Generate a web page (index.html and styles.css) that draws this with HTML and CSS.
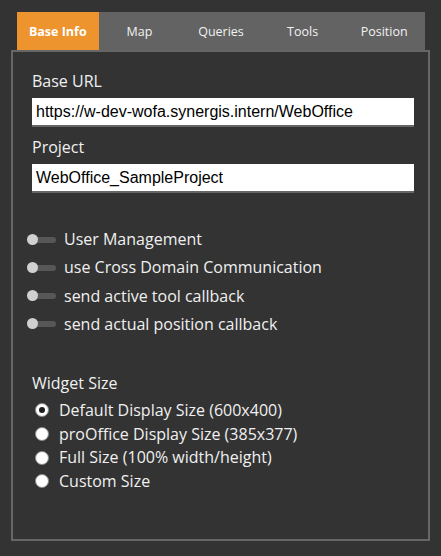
FILE: index.html
```html
<!DOCTYPE html>
<html>
<head>
<meta charset="utf-8">
<link rel="stylesheet" href="styles.css">
</head>
<body>
<div class="tabs">
  <div class="tab active">Base Info</div>
  <div class="tab">Map</div>
  <div class="tab">Queries</div>
  <div class="tab">Tools</div>
  <div class="tab">Position</div>
</div>
<div class="panel">
  <div class="label">Base URL</div>
  <div class="input">https://w-dev-wofa.synergis.intern/WebOffice</div>
  <div class="label">Project</div>
  <div class="input">WebOffice_SampleProject</div>

  <div class="toggles">
    <div class="toggle-row"><span class="toggle"><span class="knob"></span></span>User Management</div>
    <div class="toggle-row"><span class="toggle"><span class="knob"></span></span>use Cross Domain Communication</div>
    <div class="toggle-row"><span class="toggle"><span class="knob"></span></span>send active tool callback</div>
    <div class="toggle-row"><span class="toggle"><span class="knob"></span></span>send actual position callback</div>
  </div>

  <div class="label section">Widget Size</div>
  <div class="radios">
    <div class="radio-row"><span class="radio checked"></span>Default Display Size (600x400)</div>
    <div class="radio-row"><span class="radio"></span>proOffice Display Size (385x377)</div>
    <div class="radio-row"><span class="radio"></span>Full Size (100% width/height)</div>
    <div class="radio-row"><span class="radio"></span>Custom Size</div>
  </div>
</div>
</body>
</html>
```
FILE: styles.css
```css
html, body {
  margin: 0;
  padding: 0;
  background: #333333;
  height: 100%;
}
body {
  font-family: "Open Sans", "Noto Sans", sans-serif;
  color: #f0f0f0;
  padding-top: 12px;
}
.tabs {
  display: flex;
  margin-left: 17px;
  width: 408px;
  height: 38px;
  background: #636363;
}
.tab {
  flex: 1;
  display: flex;
  align-items: center;
  justify-content: center;
  font-size: 12.5px;
  color: #f2f2f2;
}
.tab.active {
  background: #ee942e;
  font-weight: bold;
  color: #ffffff;
}
.panel {
  margin-left: 11px;
  border: 2px solid #666666;
  padding: 18px 14px 0 19px;
  box-sizing: border-box;
  width: 419px;
  height: 491px;
}
.label {
  font-size: 16px;
  line-height: 22px;
  color: #f0f0f0;
}
.input {
  margin-top: 6px;
  margin-bottom: 9px;
  height: 29px;
  background: #ffffff;
  border-bottom: 2px solid #666666;
  box-sizing: border-box;
  width: 382px;
  font-family: "Liberation Sans", Arial, sans-serif;
  font-size: 16px;
  color: #000000;
  line-height: 27px;
  padding-left: 4px;
}
.toggles {
  margin-top: 35px;
  display: flex;
  flex-direction: column;
  gap: 6.3px;
}
.toggle-row {
  display: flex;
  align-items: center;
  font-size: 16px;
  line-height: 22px;
}
.toggle {
  position: relative;
  width: 29px;
  height: 11px;
  margin-left: -5px;
  margin-right: 8px;
  display: inline-block;
}
.toggle::before {
  content: "";
  position: absolute;
  left: 6px;
  right: 0;
  top: 3px;
  height: 6px;
  border-radius: 3px;
  background: #575757;
}
.knob {
  position: absolute;
  left: 0;
  top: 0;
  width: 11px;
  height: 11px;
  border-radius: 50%;
  background: #d0d0d0;
}
.section {
  margin-top: 37px;
}
.radios {
  margin-top: 5px;
  display: flex;
  flex-direction: column;
  gap: 0.7px;
}
.radio-row {
  display: flex;
  align-items: center;
  font-size: 16px;
  line-height: 23px;
}
.radio {
  width: 14px;
  height: 14px;
  border-radius: 50%;
  background: #ffffff;
  box-sizing: border-box;
  border: 1px solid #8a8a8a;
  margin-left: 3px;
  margin-right: 10px;
  position: relative;
  flex: none;
}
.radio.checked::after {
  content: "";
  position: absolute;
  left: 3px;
  top: 3px;
  width: 6px;
  height: 6px;
  border-radius: 50%;
  background: #1e1e1e;
}
```
